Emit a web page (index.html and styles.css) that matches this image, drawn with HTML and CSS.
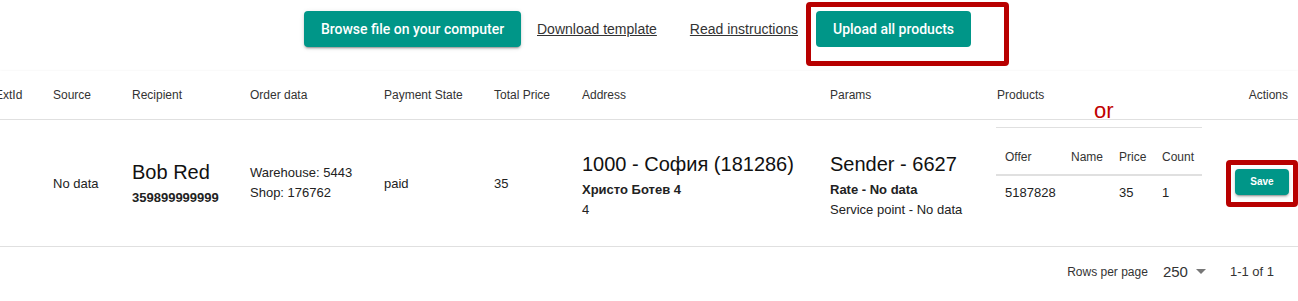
FILE: index.html
```html
<!DOCTYPE html>
<html lang="en">
<head>
    <meta charset="UTF-8">
    <meta name="viewport" content="width=device-width, initial-scale=1.0">
    <title>Import orders</title>
    <link rel="stylesheet" href="styles.css">
</head>
<body>
    <div class="toolbar">
        <button class="btn btn-browse">Browse file on your computer</button>
        <a href="#" class="link link-template">Download template</a>
        <a href="#" class="link link-read">Read instructions</a>
        <div class="mark mark-upload">
            <button class="btn">Upload all products</button>
        </div>
    </div>

    <div class="paper">
        <span class="or-note">or</span>
        <table class="orders">
            <colgroup>
                <col style="width: 58px">
                <col style="width: 79px">
                <col style="width: 118px">
                <col style="width: 134px">
                <col style="width: 110px">
                <col style="width: 88px">
                <col style="width: 248px">
                <col style="width: 167px">
                <col style="width: 221px">
                <col style="width: 80px">
            </colgroup>
            <thead>
                <tr>
                    <th>ExtId</th>
                    <th>Source</th>
                    <th>Recipient</th>
                    <th>Order data</th>
                    <th>Payment State</th>
                    <th>Total Price</th>
                    <th>Address</th>
                    <th>Params</th>
                    <th>Products</th>
                    <th class="actions">Actions</th>
                </tr>
            </thead>
            <tbody>
                <tr class="row">
                    <td></td>
                    <td>No data</td>
                    <td>
                        <div class="recipient">
                            <div class="big">Bob Red</div>
                            <div class="strong phone">359899999999</div>
                        </div>
                    </td>
                    <td>
                        <div class="line">Warehouse: 5443</div>
                        <div class="line">Shop: 176762</div>
                    </td>
                    <td>paid</td>
                    <td>35</td>
                    <td>
                        <div class="block">
                            <div class="big">1000 - София (181286)</div>
                            <div class="line strong second">Христо Ботев 4</div>
                            <div class="line">4</div>
                        </div>
                    </td>
                    <td>
                        <div class="block">
                            <div class="big">Sender - 6627</div>
                            <div class="line strong second">Rate - No data</div>
                            <div class="line">Service point - No data</div>
                        </div>
                    </td>
                    <td class="products-cell">
                        <table class="products">
                            <thead>
                                <tr>
                                    <th style="width: 66px">Offer</th>
                                    <th style="width: 48px">Name</th>
                                    <th style="width: 43px">Price</th>
                                    <th style="width: 49px">Count</th>
                                </tr>
                            </thead>
                            <tbody>
                                <tr>
                                    <td>5187828</td>
                                    <td></td>
                                    <td>35</td>
                                    <td>1</td>
                                </tr>
                            </tbody>
                        </table>
                    </td>
                    <td class="actions-cell">
                        <div class="mark mark-save">
                            <button class="btn btn-save">Save</button>
                        </div>
                    </td>
                </tr>
            </tbody>
        </table>
        <div class="pager">
            <span class="pager-label">Rows per page</span>
            <span class="pager-select">250</span>
            <span class="pager-arrow"></span>
            <span class="pager-count">1-1 of 1</span>
        </div>
    </div>
</body>
</html>
```

FILE: styles.css
```css
body {
    margin: 0;
    font-family: "Liberation Sans", Arial, sans-serif;
    color: #222;
    background-color: #fff;
}
.toolbar {
    display: flex;
    align-items: flex-start;
    height: 71px;
    padding-left: 304px;
    box-sizing: border-box;
}
.btn {
    height: 36px;
    padding: 0 16px;
    border: none;
    border-radius: 4px;
    background-color: #009688;
    color: #fff;
    font-family: Roboto, "Liberation Sans", sans-serif;
    font-weight: 500;
    font-size: 14px;
    cursor: pointer;
    box-shadow: 0 3px 1px -2px rgba(0, 0, 0, 0.2), 0 2px 2px 0 rgba(0, 0, 0, 0.14), 0 1px 5px 0 rgba(0, 0, 0, 0.12);
}
.btn-browse {
    width: 217px;
    margin-top: 11px;
    padding: 0;
}
.link {
    margin-top: 11px;
    line-height: 36px;
    font-size: 14px;
    color: #333;
    text-decoration: underline;
}
.link-template {
    margin-left: 16px;
}
.link-read {
    margin-left: 33px;
}
.mark {
    border: 5px solid #b80000;
    border-radius: 4px;
}
.mark-upload {
    margin-top: 2px;
    margin-left: 8px;
    padding: 4px 33px 14px 5px;
}
.mark-upload .btn {
    width: 155px;
    padding: 0;
    box-shadow: none;
}
.paper {
    position: relative;
    width: 1298px;
    overflow: hidden;
    box-shadow: 0 2px 1px -1px rgba(0, 0, 0, 0.2), 0 1px 1px 0 rgba(0, 0, 0, 0.14), 0 1px 3px 0 rgba(0, 0, 0, 0.12);
}
.or-note {
    position: absolute;
    left: 1094px;
    top: 29px;
    font-size: 22px;
    line-height: 1;
    color: #c00000;
}
.orders {
    table-layout: fixed;
    width: 1303px;
    margin-left: -5px;
    border-collapse: collapse;
}
.orders > thead th {
    height: 48px;
    padding: 0;
    text-align: left;
    font-weight: normal;
    font-size: 12px;
    color: #333;
    border-bottom: 1px solid #e0e0e0;
}
.orders > thead th.actions {
    text-align: right;
    padding-right: 10px;
}
.row > td {
    height: 126px;
    padding: 0;
    font-size: 13px;
    vertical-align: middle;
    border-bottom: 1px solid #e0e0e0;
}
.big {
    font-size: 20px;
    line-height: 24px;
    color: #111;
}
.strong {
    font-weight: bold;
}
.recipient {
    padding-top: 2px;
}
.phone {
    margin-top: 4px;
    line-height: 20px;
}
.block {
    padding-top: 6px;
}
.line {
    line-height: 20px;
}
.second {
    margin-top: 4px;
}
.products-cell {
    vertical-align: top !important;
}
.products {
    width: 206px;
    margin-top: 7px;
    margin-left: -1px;
    border-collapse: collapse;
    border-top: 1px solid #e0e0e0;
}
.products th {
    height: 47px;
    padding: 0 0 10px 9px;
    box-sizing: border-box;
    vertical-align: bottom;
    text-align: left;
    font-weight: normal;
    font-size: 12px;
    color: #333;
    border-bottom: 2px solid #e0e0e0;
}
.products td {
    height: 34px;
    padding: 0 0 0 9px;
    font-size: 13px;
}
.actions-cell {
    text-align: right;
}
.mark-save {
    display: inline-block;
    padding: 4px 4px 7px 4px;
    vertical-align: middle;
}
.btn-save {
    display: block;
    width: 54px;
    height: 26px;
    padding: 0;
    font-family: "Liberation Sans", sans-serif;
    font-weight: bold;
    font-size: 10px;
}
.pager {
    display: flex;
    align-items: center;
    justify-content: flex-end;
    height: 49px;
    padding-right: 24px;
    font-size: 12px;
    color: #333;
}
.pager-select {
    margin-left: 15px;
    font-size: 15px;
    color: #333;
}
.pager-arrow {
    margin-left: 8px;
    width: 0;
    height: 0;
    border-left: 5px solid transparent;
    border-right: 5px solid transparent;
    border-top: 5px solid #777;
}
.pager-count {
    margin-left: 24px;
    font-size: 13px;
}
```
